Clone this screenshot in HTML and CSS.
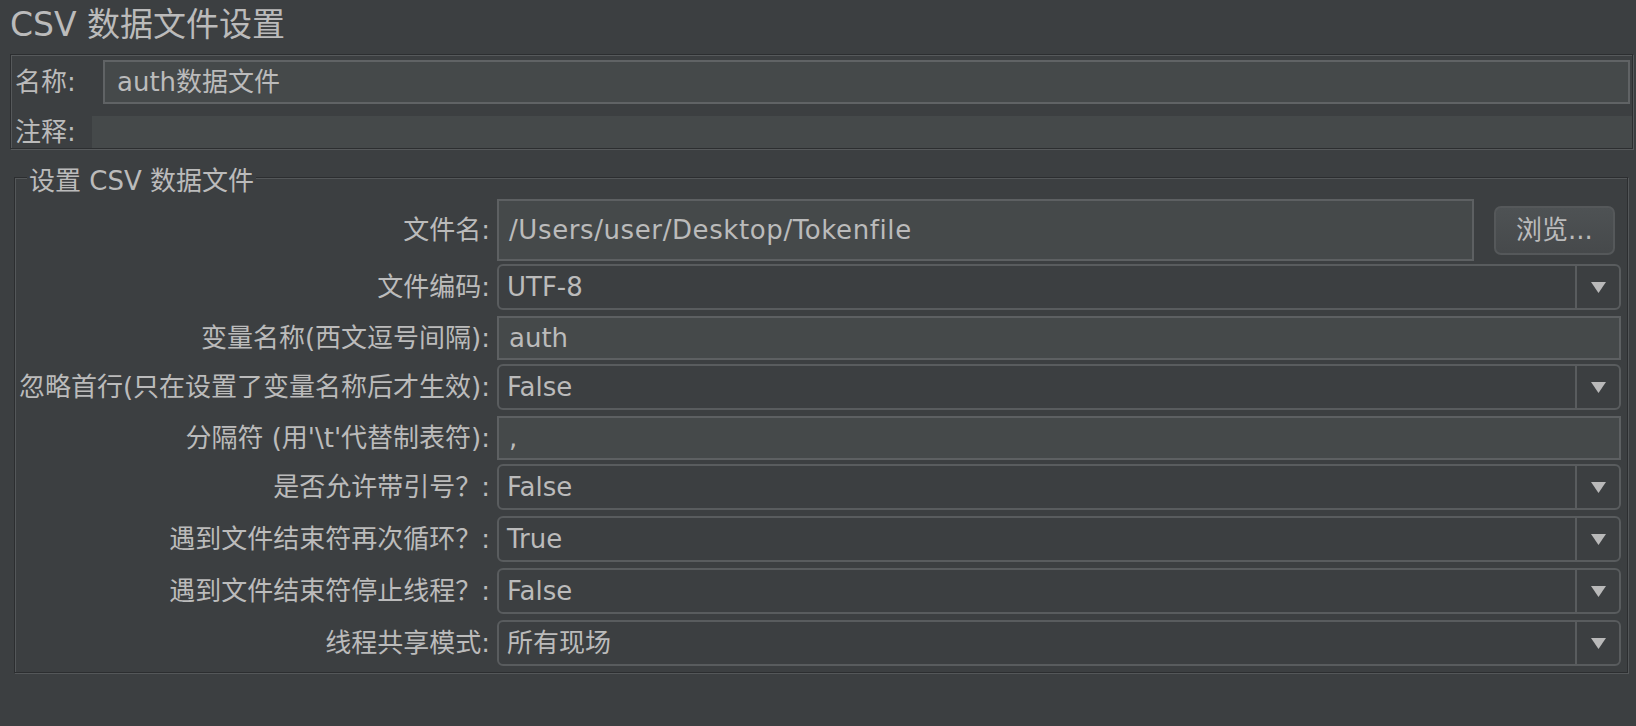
FILE: index.html
```html
<!DOCTYPE html>
<html lang="zh-CN">
<head>
<meta charset="utf-8">
<title>CSV 数据文件设置</title>
<link rel="stylesheet" href="styles.css">
</head>
<body>
<div class="title">CSV 数据文件设置</div>

<div class="meta">
  <div class="meta-row name-row">
    <span class="meta-label name-label">名称:</span>
    <div class="name-field">auth数据文件</div>
  </div>
  <div class="meta-row comment-row">
    <span class="meta-label comment-label">注释:</span>
    <div class="comment-field"></div>
  </div>
</div>

<fieldset class="group">
  <legend class="group-title">设置 CSV 数据文件</legend>

  <div class="row row-file">
    <span class="lbl">文件名:</span>
    <div class="tf tf-file">/Users/user/Desktop/Tokenfile</div>
    <div class="btn">浏览...</div>
  </div>

  <div class="row row-combo">
    <span class="lbl">文件编码:</span>
    <div class="combo"><span class="val">UTF-8</span><span class="arrow"><svg width="15" height="11" viewBox="0 0 15 11"><polygon points="0,0 15,0 7.5,11" fill="#b9b9b9"/></svg></span></div>
  </div>

  <div class="row row-text">
    <span class="lbl">变量名称(西文逗号间隔):</span>
    <div class="tf">auth</div>
  </div>

  <div class="row row-combo">
    <span class="lbl">忽略首行(只在设置了变量名称后才生效):</span>
    <div class="combo"><span class="val">False</span><span class="arrow"><svg width="15" height="11" viewBox="0 0 15 11"><polygon points="0,0 15,0 7.5,11" fill="#b9b9b9"/></svg></span></div>
  </div>

  <div class="row row-text">
    <span class="lbl">分隔符 (用'\t'代替制表符):</span>
    <div class="tf">,</div>
  </div>

  <div class="row row-combo">
    <span class="lbl">是否允许带引号？:</span>
    <div class="combo"><span class="val">False</span><span class="arrow"><svg width="15" height="11" viewBox="0 0 15 11"><polygon points="0,0 15,0 7.5,11" fill="#b9b9b9"/></svg></span></div>
  </div>

  <div class="row row-combo">
    <span class="lbl">遇到文件结束符再次循环？:</span>
    <div class="combo"><span class="val">True</span><span class="arrow"><svg width="15" height="11" viewBox="0 0 15 11"><polygon points="0,0 15,0 7.5,11" fill="#b9b9b9"/></svg></span></div>
  </div>

  <div class="row row-combo">
    <span class="lbl">遇到文件结束符停止线程？:</span>
    <div class="combo"><span class="val">False</span><span class="arrow"><svg width="15" height="11" viewBox="0 0 15 11"><polygon points="0,0 15,0 7.5,11" fill="#b9b9b9"/></svg></span></div>
  </div>

  <div class="row row-combo row-last">
    <span class="lbl">线程共享模式:</span>
    <div class="combo"><span class="val">所有现场</span><span class="arrow"><svg width="15" height="11" viewBox="0 0 15 11"><polygon points="0,0 15,0 7.5,11" fill="#b9b9b9"/></svg></span></div>
  </div>
</fieldset>
</body>
</html>
```

FILE: styles.css
```css
* { box-sizing: border-box; }

html, body {
  margin: 0;
  padding: 0;
  background: #3c3f41;
}

body {
  width: 1636px;
  height: 726px;
  overflow: hidden;
  font-family: "DejaVu Sans", "Noto Sans CJK SC", sans-serif;
  font-size: 26px;
  color: #bbbbbb;
}

.title {
  font-size: 33px;
  line-height: 50px;
  height: 50px;
  padding-left: 10px;
  margin-bottom: 4px;
  white-space: nowrap;
}

/* top name / comment panel */
.meta {
  margin: 0 3px 0 10px;
  border: 1px solid #2c2e30;
  box-shadow: inset 1px 1px 0 #56595b, 1px 1px 0 #56595b;
  padding: 5px 0 0 4px;
}

.meta-row {
  display: flex;
  align-items: center;
}

.name-row {
  height: 44px;
  margin-bottom: 12px;
}

.comment-row {
  height: 32px;
}

.meta-label {
  line-height: 30px;
  white-space: nowrap;
}

.name-label { width: 88px; }
.comment-label { width: 77px; }

.name-field {
  flex: 1;
  height: 44px;
  margin-right: 2px;
  border: 2px solid #606365;
  background: #45494a;
  padding-left: 12px;
  display: flex;
  align-items: center;
  line-height: 30px;
}

.comment-field {
  flex: 1;
  height: 32px;
  background: #45494a;
}

/* settings group */
.group {
  margin: 9px 8px 0 14px;
  padding: 3px 6px 6px 0;
  border: 1px solid #2c2e30;
  box-shadow: inset 1px 1px 0 #545759, 1px 1px 0 #545759;
  min-width: 0;
}

.group-title {
  margin-left: 12px;
  padding: 8px 2px 0;
  line-height: 30px;
  background: #3c3f41;
  white-space: nowrap;
}

.row {
  display: flex;
  align-items: center;
}

.row-file { margin-bottom: 3px; }
.row-text { margin-bottom: 4px; }
.row-combo { margin-bottom: 6px; }
.row-last { margin-bottom: 0; }

.lbl {
  width: 475px;
  margin-right: 7px;
  text-align: right;
  line-height: 30px;
  white-space: nowrap;
}

.tf {
  flex: 1;
  height: 44px;
  border: 2px solid #5d6062;
  background: #45494a;
  padding-left: 10px;
  display: flex;
  align-items: center;
  line-height: 30px;
  white-space: nowrap;
}

.tf-file {
  height: 62px;
  letter-spacing: 0.6px;
}

.btn {
  width: 121px;
  height: 49px;
  margin: 0 6px 0 20px;
  border: 2px solid #55585a;
  border-radius: 7px;
  background: linear-gradient(#4e5254, #46494b);
  display: flex;
  align-items: center;
  justify-content: center;
  line-height: 30px;
  white-space: nowrap;
}

.combo {
  flex: 1;
  height: 46px;
  border: 2px solid #595c5e;
  border-radius: 6px;
  display: flex;
}

.combo .val {
  flex: 1;
  padding-left: 8px;
  display: flex;
  align-items: center;
  line-height: 30px;
  white-space: nowrap;
}

.combo .arrow {
  width: 44px;
  border-left: 2px solid #595c5e;
  display: flex;
  align-items: center;
  justify-content: center;
}

.combo .arrow svg {
  display: block;
}
```
